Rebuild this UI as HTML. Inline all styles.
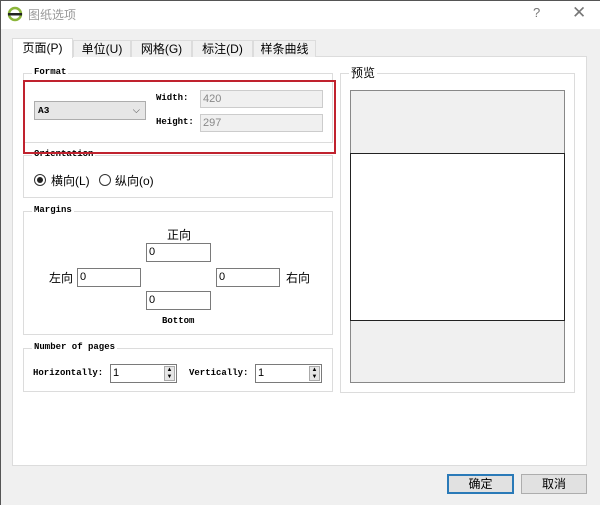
<!DOCTYPE html>
<html><head><meta charset="utf-8"><style>
*{margin:0;padding:0;box-sizing:border-box}
body{width:600px;height:505px;background:#f0f0f0;position:relative;overflow:hidden;font-family:"Liberation Serif","Noto Sans CJK SC",serif;font-size:11px;color:#000}
.a{position:absolute}
.cjk{font-family:"Liberation Sans","Noto Sans CJK SC",sans-serif;font-size:12px}
.grp{position:absolute;border:1px solid #dcdcdc}
.lg{position:absolute;top:-7px;left:8px;background:#fff;padding:0 2px;font-size:9px;font-weight:bold;font-family:"Liberation Mono","Noto Sans CJK SC",monospace}
.inp{position:absolute;background:#fff;border:1px solid #7a7a7a;font-family:"Liberation Sans",sans-serif;font-size:11px;padding-left:2px;line-height:17px}
.mono{font-family:"Liberation Mono",monospace;font-weight:bold;font-size:9px}
</style></head><body>
<div class="a" style="left:0;top:0;width:600px;height:29px;background:#fff"></div>
<div class="a" style="left:0;top:0;width:1px;height:505px;background:#555"></div>
<div class="a" style="left:0;top:0;width:600px;height:1px;background:#555"></div>
<svg class="a" style="left:7px;top:6px" width="16" height="16"><circle cx="8" cy="8" r="6" fill="none" stroke="#8bb53a" stroke-width="2.5"/><rect x="1" y="7" width="14" height="2.5" fill="#222"/></svg>
<div class="a cjk" style="left:28px;top:6px;color:#999">图纸选项</div>
<div class="a" style="left:533px;top:5px;color:#777;font-family:'Liberation Sans';font-size:13px">?</div>
<div class="a" style="left:572px;top:3px;color:#777;font-family:'Liberation Sans';font-size:17px">✕</div>
<div class="a" style="left:12px;top:56px;width:575px;height:410px;background:#fff;border:1px solid #dcdcdc"></div>
<div class="a cjk" style="left:73px;top:40px;width:58px;height:17px;border:1px solid #dcdcdc;border-bottom:none;background:#f0f0f0;text-align:center;line-height:16px">单位(U)</div>
<div class="a cjk" style="left:131px;top:40px;width:61px;height:17px;border:1px solid #dcdcdc;border-bottom:none;background:#f0f0f0;text-align:center;line-height:16px">网格(G)</div>
<div class="a cjk" style="left:192px;top:40px;width:61px;height:17px;border:1px solid #dcdcdc;border-bottom:none;background:#f0f0f0;text-align:center;line-height:16px">标注(D)</div>
<div class="a cjk" style="left:253px;top:40px;width:63px;height:17px;border:1px solid #dcdcdc;border-bottom:none;background:#f0f0f0;text-align:center;line-height:16px">样条曲线</div>
<div class="a cjk" style="left:12px;top:38px;width:61px;height:20px;border:1px solid #dcdcdc;border-bottom:none;background:#fff;text-align:center;line-height:18px">页面(P)</div>
<div class="grp" style="left:23px;top:73px;width:310px;height:70px"><span class="lg">Format</span></div>
<div class="a" style="left:34px;top:101px;width:112px;height:19px;background:#e6e6e6;border:1px solid #adadad;font-family:'Liberation Mono';font-weight:bold;font-size:9.5px;padding-left:3px;line-height:17px">A3<span style="position:absolute;right:5px;top:0;font-weight:normal;color:#555">⌵</span></div>
<div class="a mono" style="left:156px;top:93px">Width:</div>
<div class="a mono" style="left:156px;top:117px">Height:</div>
<div class="a" style="left:200px;top:90px;width:123px;height:18px;background:#f0f0f0;border:1px solid #ccc;color:#888;font-family:'Liberation Sans';padding-left:2px;line-height:16px">420</div>
<div class="a" style="left:200px;top:114px;width:123px;height:18px;background:#f0f0f0;border:1px solid #ccc;color:#888;font-family:'Liberation Sans';padding-left:2px;line-height:16px">297</div>
<div class="grp" style="left:23px;top:155px;width:310px;height:43px"><span class="lg">Orientation</span></div>
<div class="a" style="left:34px;top:174px;width:12px;height:12px;border-radius:50%;border:1px solid #333;background:#fff"><div style="margin:2px;width:6px;height:6px;border-radius:50%;background:#222"></div></div>
<div class="a cjk" style="left:51px;top:172px">横向(L)</div>
<div class="a" style="left:99px;top:174px;width:12px;height:12px;border-radius:50%;border:1px solid #333;background:#fff"></div>
<div class="a cjk" style="left:115px;top:172px">纵向(o)</div>
<div class="a" style="left:23px;top:80px;width:313px;height:74px;border:2px solid #c0222e"></div>
<div class="grp" style="left:23px;top:211px;width:310px;height:124px"><span class="lg">Margins</span></div>
<div class="a cjk" style="left:167px;top:226px">正向</div>
<div class="inp" style="left:146px;top:243px;width:65px;height:19px">0</div>
<div class="a cjk" style="left:49px;top:269px">左向</div>
<div class="inp" style="left:77px;top:268px;width:64px;height:19px">0</div>
<div class="inp" style="left:216px;top:268px;width:64px;height:19px">0</div>
<div class="a cjk" style="left:286px;top:269px">右向</div>
<div class="inp" style="left:146px;top:291px;width:65px;height:19px">0</div>
<div class="a mono" style="left:162px;top:316px">Bottom</div>
<div class="grp" style="left:23px;top:348px;width:310px;height:44px"><span class="lg">Number of pages</span></div>
<div class="a mono" style="left:33px;top:368px">Horizontally:</div>
<div class="inp" style="left:110px;top:364px;width:67px;height:19px">1<div style="position:absolute;right:1px;top:1px;width:11px;height:15px;background:#e6e6e6;border:1px solid #aaa;font-size:6px;line-height:7px;text-align:center">▲<br>▼</div></div>
<div class="a mono" style="left:189px;top:368px">Vertically:</div>
<div class="inp" style="left:255px;top:364px;width:67px;height:19px">1<div style="position:absolute;right:1px;top:1px;width:11px;height:15px;background:#e6e6e6;border:1px solid #aaa;font-size:6px;line-height:7px;text-align:center">▲<br>▼</div></div>
<div class="grp" style="left:340px;top:73px;width:235px;height:320px"><span class="lg cjk" style="font-weight:normal;font-size:12px;top:-10px">预览</span></div>
<div class="a" style="left:350px;top:90px;width:215px;height:293px;background:#f0f0f0;border:1px solid #888"></div>
<div class="a" style="left:350px;top:153px;width:215px;height:168px;background:#fff;border:1px solid #222"></div>
<div class="a cjk" style="left:447px;top:474px;width:67px;height:20px;background:#e1e1e1;border:2px solid #2a7ab8;text-align:center;line-height:16px">确定</div>
<div class="a cjk" style="left:521px;top:474px;width:66px;height:20px;background:#e1e1e1;border:1px solid #adadad;text-align:center;line-height:18px">取消</div>
</body></html>
